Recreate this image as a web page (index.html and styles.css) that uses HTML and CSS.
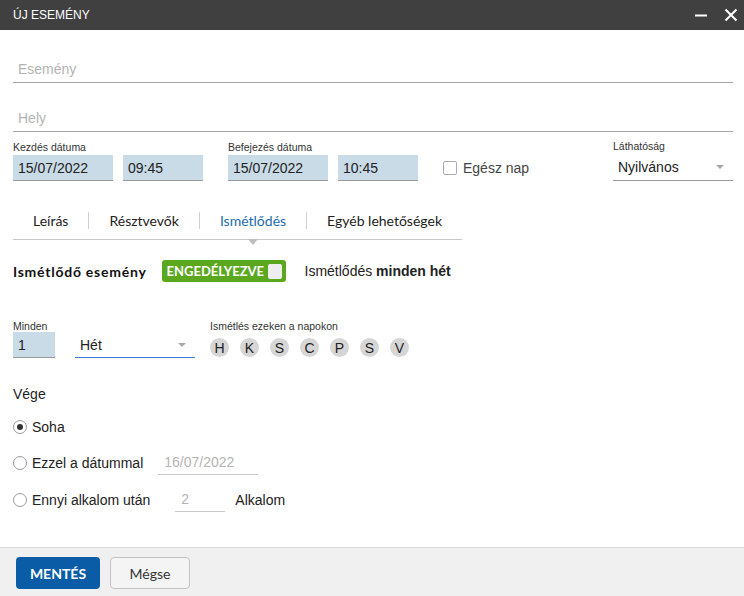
FILE: index.html
```html
<!DOCTYPE html>
<html lang="hu">
<head>
<meta charset="utf-8">
<title>Új esemény</title>
<link rel="stylesheet" href="styles.css">
</head>
<body>
<div class="dialog">
  <div class="titlebar">
    <span class="title">ÚJ ESEMÉNY</span>
    <div class="win-btns">
      <svg class="ico" width="14" height="14" viewBox="0 0 14 14"><path d="M1 7.5h12" stroke="#fff" stroke-width="2"/></svg>
      <svg class="ico" width="14" height="14" viewBox="0 0 14 14"><path d="M1.5 1.5l11 11M12.5 1.5l-11 11" stroke="#fff" stroke-width="2"/></svg>
    </div>
  </div>

  <div class="content">
    <div class="tf tf-first"><span class="ph">Esemény</span></div>
    <div class="tf tf-second"><span class="ph">Hely</span></div>

    <div class="date-row">
      <div class="group">
        <div class="lbl">Kezdés dátuma</div>
        <div class="inputs">
          <div class="inp w100">15/07/2022</div>
          <div class="inp w80">09:45</div>
        </div>
      </div>
      <div class="group g2">
        <div class="lbl">Befejezés dátuma</div>
        <div class="inputs">
          <div class="inp w100">15/07/2022</div>
          <div class="inp w80">10:45</div>
        </div>
      </div>
      <div class="allday">
        <span class="cbox"></span>
        <span>Egész nap</span>
      </div>
      <div class="group vis">
        <div class="lbl">Láthatóság</div>
        <div class="select sel-vis"><span>Nyilvános</span><span class="caret"></span></div>
      </div>
    </div>

    <div class="tabs">
      <div class="tab">Leírás</div>
      <div class="sep"></div>
      <div class="tab">Résztvevők</div>
      <div class="sep"></div>
      <div class="tab active">Ismétlődés<span class="tri"></span></div>
      <div class="sep"></div>
      <div class="tab">Egyéb lehetőségek</div>
    </div>

    <div class="rec-row">
      <span class="rec-title">Ismétlődő esemény</span>
      <span class="badge">ENGEDÉLYEZVE<span class="badge-box"></span></span>
      <span class="rec-info">Ismétlődés <b>minden hét</b></span>
    </div>

    <div class="every-row">
      <div class="group">
        <div class="lbl">Minden</div>
        <div class="inp w42">1</div>
      </div>
      <div class="select sel-unit"><span>Hét</span><span class="caret"></span></div>
      <div class="group days-group">
        <div class="lbl">Ismétlés ezeken a napokon</div>
        <div class="days">
          <span class="day">H</span>
          <span class="day">K</span>
          <span class="day">S</span>
          <span class="day">C</span>
          <span class="day">P</span>
          <span class="day">S</span>
          <span class="day">V</span>
        </div>
      </div>
    </div>

    <div class="end-title">Vége</div>
    <div class="radio-row r1"><span class="radio on"></span><span>Soha</span></div>
    <div class="radio-row r2"><span class="radio"></span><span>Ezzel a dátummal</span><div class="uline w100 ml15"><span class="ph">16/07/2022</span></div></div>
    <div class="radio-row r3"><span class="radio"></span><span>Ennyi alkalom után</span><div class="uline w50 ml25"><span class="ph">2</span></div><span class="ml10">Alkalom</span></div>
  </div>

  <div class="footer">
    <button class="btn primary">MENTÉS</button>
    <button class="btn secondary">Mégse</button>
  </div>
</div>
</body>
</html>
```

FILE: styles.css
```css
* { box-sizing: border-box; }
html, body { margin: 0; padding: 0; }
body {
  width: 744px;
  height: 596px;
  font-family: "Liberation Sans", Arial, sans-serif;
  font-size: 14px;
  color: #222;
  background: #fff;
  overflow: hidden;
}
.dialog { display: flex; flex-direction: column; height: 596px; }

.titlebar {
  height: 30px;
  background: #404040;
  display: flex;
  align-items: center;
  padding: 0 6px 0 13px;
}
.title { color: #fff; font-size: 12px; }
.win-btns { margin-left: auto; display: flex; gap: 16px; align-items: center; }
.ico { display: block; }

.content { flex: 1; padding: 0 11px 0 13px; }

.tf {
  height: 33px;
  border-bottom: 1px solid #a5a5a5;
  padding: 5px 0 0 5px;
  line-height: 28px;
}
.tf-first { margin-top: 20px; }
.tf-second { margin-top: 16px; }
.ph { color: #b4b4b4; }

.date-row { display: flex; align-items: flex-end; margin-top: 8px; }
.group { display: flex; flex-direction: column; }
.g2 { margin-left: 25px; }
.lbl { font-size: 10.5px; line-height: 12px; color: #333; margin-bottom: 2px; white-space: nowrap; }
.inputs { display: flex; gap: 10px; }
.inp {
  height: 26px;
  background: #c9dbe7;
  border-bottom: 1px solid #9a9a9a;
  padding: 0 5px;
  line-height: 26px;
}
.w100 { width: 100px; }
.w80 { width: 80px; }
.w50 { width: 50px; }
.w42 { width: 42px; }

.allday { display: flex; align-items: center; height: 26px; margin-left: 25px; gap: 6px; color: #444; }
.cbox { width: 14px; height: 14px; border: 1px solid #aaa; border-radius: 2px; background: #fff; }

.vis { margin-left: auto; width: 120px; }
.select {
  height: 27px;
  border-bottom: 1px solid #9a9a9a;
  display: flex;
  align-items: center;
  padding: 0 9px 0 5px;
}
.caret {
  margin-left: auto;
  width: 0; height: 0;
  border-left: 4px solid transparent;
  border-right: 4px solid transparent;
  border-top: 4px solid #a8a8a8;
}

.tabs {
  display: inline-flex;
  align-items: center;
  margin-top: 21px;
  height: 38px;
  border-bottom: 1px solid #c8c8c8;
  font-family: Lato, "Liberation Sans", sans-serif;
  font-size: 14px;
}
.tab { padding: 0 20px 0 20px; position: relative; line-height: 34px; color: #222; }
.tab.active { color: #1b6cad; }
.sep { width: 1px; height: 17px; margin-bottom: 1px; background: #d0d0d0; }
.tri {
  position: absolute;
  left: 50%;
  bottom: -7px;
  margin-left: -5px;
  width: 0; height: 0;
  border-left: 5px solid transparent;
  border-right: 5px solid transparent;
  border-top: 6px solid #bdbdbd;
}

.rec-row { display: flex; align-items: center; margin-top: 20px; height: 22px; }
.rec-title { font-family: Lato, "Liberation Sans", sans-serif; font-weight: 700; font-size: 14px; letter-spacing: 0.75px; color: #111; }
.badge {
  margin-left: 15px;
  height: 22px;
  width: 124px;
  background: #5ba81f;
  border-radius: 3px;
  color: #fff;
  font-family: Lato, "Liberation Sans", sans-serif;
  font-weight: 700;
  font-size: 13px;
  display: flex;
  align-items: center;
  padding: 0 4px 0 5px;
}
.badge-box { margin-left: auto; width: 14px; height: 15px; background: #eee; border-radius: 2px; }
.rec-info { margin-left: 19px; }
.rec-info b { font-weight: 700; }

.every-row { display: flex; align-items: flex-start; margin-top: 38px; }
.every-row .lbl { margin-bottom: 0; }
.sel-unit { width: 120px; margin-left: 20px; margin-top: 12px; height: 26px; border-bottom: 1px solid #3b7ddd; }
.days-group { margin-left: 15px; }
.days { display: flex; gap: 11px; margin-top: 6px; }
.day {
  width: 19px; height: 19px;
  border-radius: 50%;
  background: #d6d6d6;
  display: flex; align-items: center; justify-content: center;
  font-size: 14px;
  color: #222;
}

.end-title { margin-top: 26px; line-height: 20px; }
.radio-row { display: flex; align-items: center; height: 24px; }
.r1 { margin-top: 11px; }
.r2 { margin-top: 12px; }
.r3 { margin-top: 13px; }
.radio {
  width: 14px; height: 14px;
  border: 1px solid #9a9a9a;
  border-radius: 50%;
  margin-right: 5px;
  display: flex; align-items: center; justify-content: center;
  background: #fff;
}
.radio.on::after { content: ""; width: 6px; height: 6px; border-radius: 50%; background: #333; }
.uline { height: 24px; border-bottom: 1px solid #c8c8c8; padding: 0 6px; line-height: 22px; }
.ml15 { margin-left: 15px; }
.ml25 { margin-left: 25px; }
.ml10 { margin-left: 10px; }

.footer {
  height: 49px;
  border-top: 1px solid #d8d8d8;
  background: #f0f0f0;
  display: flex;
  gap: 10px;
  padding: 9px 16px 0;
  align-items: flex-start;
}
.btn {
  height: 32px;
  border-radius: 4px;
  font-family: Lato, "Liberation Sans", sans-serif;
  font-size: 14px;
  padding: 0;
  cursor: pointer;
}
.primary { width: 84px; background: #0a5ca7; border: none; color: #fff; font-weight: 700; }
.secondary { width: 80px; background: #f4f4f4; border: 1px solid #c3c3c3; color: #333; }
```
